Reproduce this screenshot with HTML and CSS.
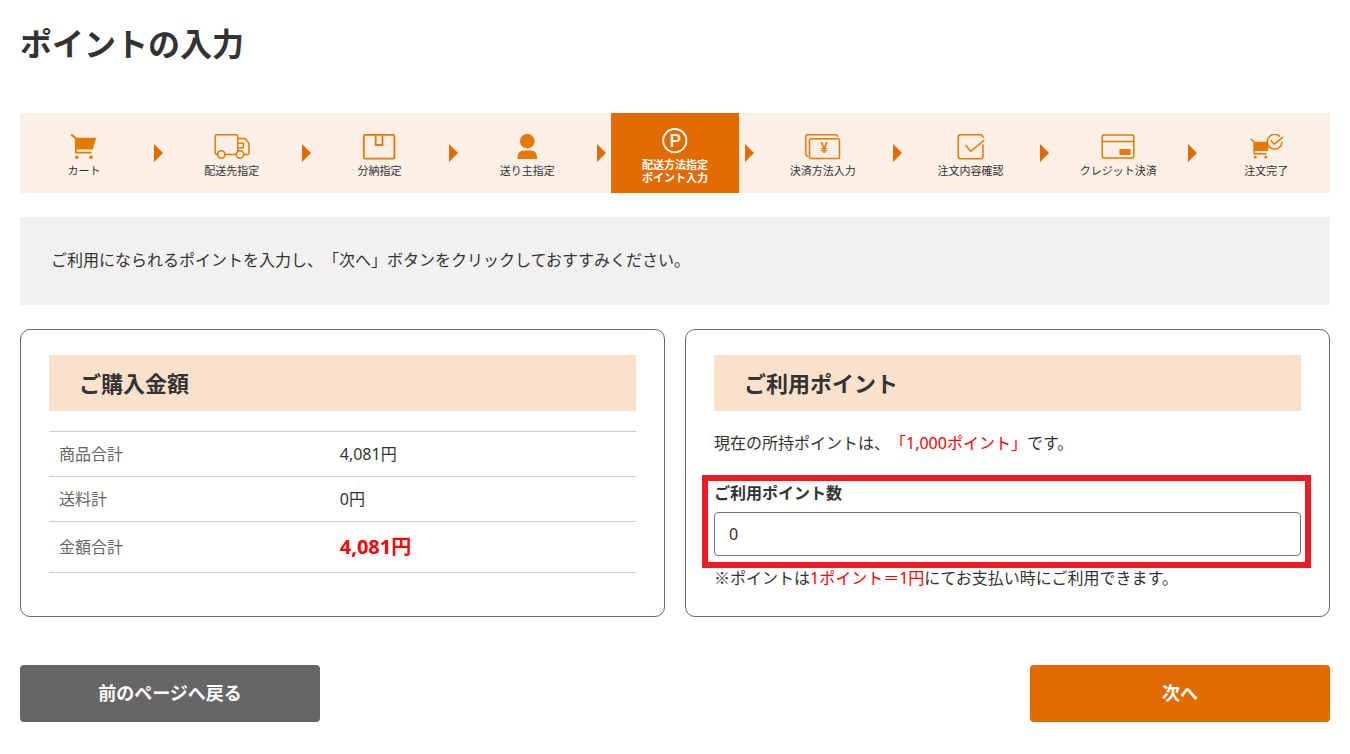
FILE: index.html
```html
<!DOCTYPE html>
<html lang="ja">
<head>
<meta charset="utf-8">
<meta name="viewport" content="width=device-width, initial-scale=1">
<title>ポイントの入力</title>
<link rel="stylesheet" href="styles.css">
</head>
<body>
<main class="page">
  <h1 class="page-title">ポイントの入力</h1>

  <ol class="steps">
    <li class="step">
      <svg class="step-icon" viewBox="0 0 40 26" aria-hidden="true">
        <path class="line thick" d="M7.7 0.8 11.8 4.5V18.7H26.7"/>
        <path class="solid" d="M11 3.7H32.2L28.8 15.4H11z"/>
        <circle class="solid" cx="12.8" cy="23.3" r="1.8"/><circle class="solid" cx="27" cy="23.3" r="1.8"/>
      </svg>
      <span class="step-label">カート</span>
    </li>
    <li class="arrow" aria-hidden="true"></li>
    <li class="step">
      <svg class="step-icon" viewBox="0 0 40 26" aria-hidden="true">
        <path class="line" d="M5.6 20.4H4.8Q3.2 20.4 3.2 18.8V2.2Q3.2 0.7 4.8 0.7H24Q25.7 0.7 25.7 2.2V18M13 20.4H24.3M25.7 4.5H31.5Q33 4.5 34 5.6L36.2 8.2Q37 9.2 37 10.5V19Q37 20.4 35.6 20.4H31.8M26 9.2H31.3V13.8H26"/>
        <circle class="line" cx="9.3" cy="20.5" r="3.7"/><circle class="line" cx="28" cy="20.5" r="3.7"/>
      </svg>
      <span class="step-label">配送先指定</span>
    </li>
    <li class="arrow" aria-hidden="true"></li>
    <li class="step">
      <svg class="step-icon" viewBox="0 0 40 26" aria-hidden="true">
        <rect class="line thick" x="4.8" y="0.8" width="30.6" height="23.8" rx="1.6"/>
        <path class="line thick" d="M16.7 1V11H23.5V1"/>
      </svg>
      <span class="step-label">分納指定</span>
    </li>
    <li class="arrow" aria-hidden="true"></li>
    <li class="step">
      <svg class="step-icon" viewBox="0 0 40 26" aria-hidden="true">
        <circle class="solid" cx="20.3" cy="7.2" r="7.3"/>
        <path class="solid" d="M10.5 25V23.3Q10.5 16.5 17.3 16.5H23.2Q30 16.5 30 23.3V25z"/>
      </svg>
      <span class="step-label">送り主指定</span>
    </li>
    <li class="arrow" aria-hidden="true"></li>
    <li class="step current" aria-current="step">
      <svg class="step-icon" viewBox="0 0 40 26" aria-hidden="true">
        <circle class="line thick" cx="19.8" cy="12.6" r="11.6"/>
        <text class="icon-p" x="20.2" y="19">P</text>
      </svg>
      <span class="step-label">配送方法指定<br>ポイント入力</span>
    </li>
    <li class="arrow" aria-hidden="true"></li>
    <li class="step">
      <svg class="step-icon" viewBox="0 0 40 26" aria-hidden="true">
        <path class="line" d="M4.6 22.3Q2.8 21.8 2.8 20V2.5Q2.8 0.7 4.6 0.7H32.5Q34.2 0.7 34.5 2.4"/>
        <rect class="line" x="6.5" y="4.7" width="30" height="19.8" rx="1.6"/>
        <text class="icon-yen" x="21.2" y="19.4">¥</text>
      </svg>
      <span class="step-label">決済方法入力</span>
    </li>
    <li class="arrow" aria-hidden="true"></li>
    <li class="step">
      <svg class="step-icon" viewBox="0 0 40 26" aria-hidden="true">
        <path class="line" d="M32 3.4V3Q31.6 0.7 29.3 0.7H10Q7.2 0.7 7.2 3.5V22Q7.2 24.8 10 24.8H29.3Q32 24.8 32 22V11"/>
        <path class="line" d="M15 11.5 19.6 17.3 32.8 6.6"/>
      </svg>
      <span class="step-label">注文内容確認</span>
    </li>
    <li class="arrow" aria-hidden="true"></li>
    <li class="step">
      <svg class="step-icon" viewBox="0 0 40 26" aria-hidden="true">
        <rect class="line" x="4.2" y="0.9" width="31.6" height="23" rx="1.8"/>
        <path class="line" d="M4.2 7.4H35.8"/>
        <path class="solid" d="M21.5 15H32.5V21H21.5z"/>
      </svg>
      <span class="step-label">クレジット決済</span>
    </li>
    <li class="arrow" aria-hidden="true"></li>
    <li class="step">
      <svg class="step-icon" viewBox="0 0 40 26" aria-hidden="true">
        <path class="line" d="M5 5.3 8.2 8V19.7H20"/>
        <path class="solid" d="M7.6 7.8H23.8L21.8 17H7.6z"/>
        <circle class="solid" cx="9.2" cy="23.2" r="1.4"/><circle class="solid" cx="19.8" cy="23.2" r="1.4"/>
        <circle class="halo" cx="28.7" cy="8" r="7.6"/>
        <path class="line" d="M33.6 2.1A7.4 7.4 0 1 0 36.1 8.3M25.2 6.8 28.2 10.2 36.6 3.4"/>
      </svg>
      <span class="step-label">注文完了</span>
    </li>
  </ol>

  <p class="notice">ご利用になられるポイントを入力し、「次へ」ボタンをクリックしておすすみください。</p>

  <form class="point-form">
    <div class="cards">
      <section class="card">
        <h2 class="card-title">ご購入金額</h2>
        <table class="amounts">
          <tr><th scope="row">商品合計</th><td>4,081円</td></tr>
          <tr><th scope="row">送料計</th><td>0円</td></tr>
          <tr><th scope="row">金額合計</th><td class="total">4,081円</td></tr>
        </table>
      </section>
      <section class="card">
        <h2 class="card-title">ご利用ポイント</h2>
        <p class="balance">現在の所持ポイントは、<span class="red">「1,000ポイント」</span>です。</p>
        <div class="field">
          <label class="field-label" for="points">ご利用ポイント数</label>
          <input class="field-input" id="points" name="points" type="text" inputmode="numeric" value="0">
        </div>
        <p class="note"><span class="note-mark">※</span>ポイントは<span class="red">1ポイント＝1円</span>にてお支払い時にご利用できます。</p>
      </section>
    </div>
    <div class="actions">
      <button class="btn btn-back" type="button">前のページへ戻る</button>
      <button class="btn btn-next" type="submit">次へ</button>
    </div>
  </form>
</main>
</body>
</html>
```
FILE: styles.css
```css
* {
  box-sizing: border-box;
}

body {
  margin: 0;
  background: #fff;
  color: #333;
  font-family: "Noto Sans", "Noto Sans CJK JP", sans-serif;
  font-size: 16px;
  line-height: 24px;
  text-spacing-trim: space-all;
}

h1, h2, p, ol {
  margin: 0;
  padding: 0;
}

.page {
  padding: 20px 20px 32px;
}

.page-title {
  margin-bottom: 45px;
  font-size: 32px;
  line-height: 48px;
}

.steps {
  display: flex;
  min-height: 80px;
  margin-bottom: 24px;
  background: #fcefe6;
  color: #e67a00;
  list-style: none;
}

.step {
  display: flex;
  flex: 1 1 0;
  flex-direction: column;
  align-items: center;
  justify-content: center;
  gap: 4px;
  padding-top: 5px;
}

.step-icon {
  width: 40px;
  height: 26px;
}

.step-label {
  color: #333;
  font-size: 11px;
  line-height: 13px;
  text-align: center;
  white-space: nowrap;
}

.current {
  background: #e26b00;
  color: #fff;
}

.current .step-label {
  color: #fff;
  font-weight: 700;
}

.arrow {
  display: flex;
  flex: 0 0 20px;
  align-items: center;
  justify-content: center;
  padding-left: 1px;
}

.arrow::before {
  content: "";
  border-left: 9px solid #e26b00;
  border-top: 9px solid transparent;
  border-bottom: 9px solid transparent;
}

.line {
  fill: none;
  stroke: currentColor;
  stroke-width: 1.5;
  stroke-linecap: round;
  stroke-linejoin: round;
}

.thick {
  stroke-width: 1.8;
}

.solid {
  fill: currentColor;
}

.halo {
  fill: #fcefe6;
}

.icon-p,
.icon-yen {
  fill: currentColor;
  font-family: Roboto, sans-serif;
  font-weight: 500;
  text-anchor: middle;
}

.icon-p {
  font-size: 18px;
}

.icon-yen {
  font-size: 14px;
}

.notice {
  margin-bottom: 24px;
  padding: 31px 31px 33px;
  background: #f1f1f1;
}

.cards {
  display: grid;
  grid-template-columns: 1fr 1fr;
  gap: 20px;
}

.card {
  padding: 25px 28px 26px;
  border: 1px solid #666;
  border-radius: 10px;
}

.card-title {
  margin-bottom: 20px;
  padding: 12px 30px;
  background: #f9e1cb;
  font-size: 22px;
  line-height: 32px;
}

.amounts {
  width: 100%;
  border-collapse: separate;
  border-spacing: 0;
  border-bottom: 1px solid #ccc;
}

.amounts th,
.amounts td {
  padding: 10px;
  border-top: 1px solid #ccc;
  text-align: left;
}

.amounts th {
  width: 48%;
  color: #666;
  font-weight: 400;
}

.amounts td {
  padding-left: 9px;
}

.amounts .total {
  color: #f00;
  font-size: 20px;
  font-weight: 700;
  line-height: 30px;
}

.red {
  color: #f00;
}

.balance {
  margin-bottom: 26px;
}

.note-mark {
  font-family: "Noto Sans CJK JP", sans-serif;
  line-height: 1;
}

.field {
  position: relative;
  margin-bottom: 10px;
}

/* Emphasis frame laid over the field */
.field::after {
  content: "";
  position: absolute;
  inset: -6px -10px -12px -12px;
  border: 6px solid #ed1c24;
  pointer-events: none;
}

.field-label {
  display: block;
  margin-bottom: 7px;
  font-weight: 700;
}

.field-input {
  display: block;
  width: 100%;
  height: 44px;
  padding: 0 14px;
  border: 1px solid #767676;
  border-radius: 4px;
  background: #fff;
  color: #333;
  font: inherit;
}

.actions {
  display: flex;
  justify-content: space-between;
  gap: 20px;
  margin-top: 48px;
}

.btn {
  width: 300px;
  padding: 15px 20px;
  border: 0;
  border-radius: 4px;
  color: #fff;
  font-family: inherit;
  font-size: 18px;
  font-weight: 700;
  line-height: 27px;
}

.btn-back {
  background: #666;
}

.btn-next {
  background: #e26b00;
}
```
